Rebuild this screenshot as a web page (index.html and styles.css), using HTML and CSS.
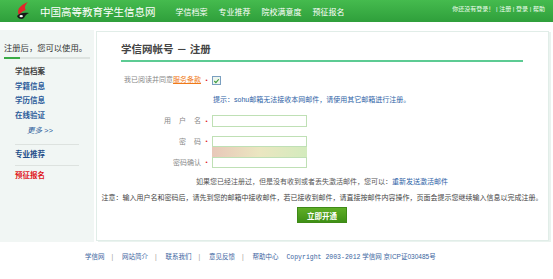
FILE: index.html
```html
<!DOCTYPE html>
<html lang="zh-CN">
<head>
  <meta charset="UTF-8">
  <title>学信网帐号 - 注册</title>
  <link rel="stylesheet" href="styles.css">
</head>
<body>
  <div class="topbar">
    <svg class="logo" width="16" height="18" viewBox="0 0 16 18">
      <path d="M13 0 C8 2 3 5 3 10 C3 12 4 13 5 13 C6 10 8 9 11 8 C9 6 10 3 13 0 Z" fill="#e1252a"/>
      <path d="M2 14 C4 11 9 10 14 11 C11 12 10 14 9 16 C7 18 3 17 2 14 Z" fill="#1a1a1a"/>
      <ellipse cx="6.2" cy="14.2" rx="1.7" ry="1.1" fill="#fff"/>
    </svg>
    <span class="site-name">中国高等教育学生信息网</span>
    <nav class="nav">
      <a href="#">学信档案</a>
      <a href="#">专业推荐</a>
      <a href="#">院校满意度</a>
      <a href="#">预征报名</a>
    </nav>
    <div class="user-links">你还没有登录！ | 注册 | 登录 | 帮助</div>
  </div>

  <div class="wrap">
    <aside class="sidebar">
      <p class="side-title">注册后，您可以使用。</p>
      <div class="side-line"></div>
      <ul class="side-list">
        <li class="dark">学信档案</li>
        <li><a href="#">学籍信息</a></li>
        <li><a href="#">学历信息</a></li>
        <li><a href="#">在线验证</a></li>
        <li class="more"><a href="#">更多 &gt;&gt;</a></li>
      </ul>
      <div class="side-sep"></div>
      <p class="side-strong">专业推荐</p>
      <div class="side-sep"></div>
      <p class="side-strong red">预征报名</p>
    </aside>

    <main class="panel">
      <h1 class="panel-title">学信网帐号 － 注册</h1>

      <div class="row agree">
        <span class="lbl">我已阅读并同意<a href="#" class="terms">服务条款</a></span>
        <span class="req">•</span>
        <span class="check">
          <svg width="8" height="8" viewBox="0 0 8 8"><path d="M1.5 4 L3.3 5.8 L6.6 2" stroke="#3a9a3a" stroke-width="1.3" fill="none"/></svg>
        </span>
      </div>

      <p class="hint">提示：sohu邮箱无法接收本网邮件，请使用其它邮箱进行注册。</p>

      <div class="row field user">
        <span class="lbl spaced">用 户 名</span>
        <span class="req">•</span>
        <input type="text" class="box">
      </div>

      <div class="row field pw">
        <span class="lbl spaced">密 码</span>
        <span class="req">•</span>
        <div class="pw-col">
          <input type="password" class="box">
          <div class="strength"></div>
        </div>
      </div>

      <div class="row field confirm">
        <span class="lbl">密码确认</span>
        <span class="req">•</span>
        <input type="password" class="box">
      </div>

      <p class="resend">如果您已经注册过，但是没有收到或者丢失激活邮件，您可以：<a href="#">重新发送激活邮件</a></p>
      <p class="note">注意：输入用户名和密码后，请先到您的邮箱中接收邮件，若已接收到邮件，请直接按邮件内容操作，页面会提示您继续输入信息以完成注册。</p>

      <div class="btn-row"><button type="button" class="btn">立即开通</button></div>
    </main>
  </div>

  <div class="footer">
    <a href="#">学信网</a><span class="sep">|</span>
    <a href="#">网站简介</a><span class="sep">|</span>
    <a href="#">联系我们</a><span class="sep">|</span>
    <a href="#">意见反馈</a><span class="sep">|</span>
    <a href="#">帮助中心</a>
    <span class="copy"><span class="mono">Copyright 2003-2012</span> 学信网 京ICP证030485号</span>
  </div>
</body>
</html>
```

FILE: styles.css
```css
body {
  margin: 0;
  padding: 0;
  font-family: "Liberation Sans", "Noto Sans CJK SC", sans-serif;
  color: #333;
  background: #fff;
}
a {
  text-decoration: none;
}
p {
  margin: 0;
}
.topbar {
  height: 22px;
  display: flex;
  align-items: center;
  background: linear-gradient(#45bb4e, #2f9f3b);
  color: #fff;
}
.logo {
  margin-left: 15px;
  flex: none;
}
.site-name {
  margin-left: 9px;
  font-size: 10.5px;
}
.nav {
  display: flex;
  gap: 11px;
  margin-left: 20px;
  font-size: 8px;
}
.nav a {
  color: #fff;
}
.user-links {
  margin-left: auto;
  margin-right: 8px;
  align-self: flex-start;
  padding-top: 4px;
  font-size: 6px;
  color: #f2fff2;
}
.wrap {
  display: flex;
  margin-top: 8px;
}
.sidebar {
  width: 94px;
  height: 212px;
  background: #f1f6f4;
  padding-top: 13px;
  box-sizing: border-box;
}
.side-title {
  padding-left: 4px;
  font-size: 8.3px;
  line-height: 10px;
  color: #333;
}
.side-line {
  height: 2px;
  margin: 4px 4px 0 4px;
  background: linear-gradient(to right, #3aab45 16px, #dde3e0 16px);
}
.side-list {
  list-style: none;
  margin: 6px 0 0 0;
  padding: 0 0 0 15px;
  font-size: 7.5px;
  line-height: 14.7px;
  font-weight: bold;
}
.side-list a {
  color: #2b5b9a;
}
.side-list .dark {
  color: #444;
}
.side-list .more {
  padding-left: 12px;
  font-style: italic;
  font-weight: normal;
}
.side-sep {
  height: 1px;
  background: #dde2df;
  margin: 5px 15px 0 15px;
}
.side-strong {
  padding-left: 15px;
  margin: 5px 0 0;
  font-size: 7.5px;
  line-height: 10px;
  font-weight: bold;
  color: #1f4f8a;
}
.side-strong.red {
  color: #e0181c;
}
.panel {
  width: 453px;
  height: 210px;
  margin-left: 2px;
  margin-top: 1px;
  border: 1px solid #e1ede8;
  box-shadow: 2px 1px 0 #eaf3ef;
  box-sizing: border-box;
  padding: 10px 25px 0 24px;
  background: #fff;
}
.panel-title {
  margin: 0;
  font-size: 10.5px;
  line-height: 14px;
  font-weight: bold;
  color: #444;
  padding-bottom: 4px;
  border-bottom: 2px solid #5ccb93;
}
.row {
  display: flex;
  align-items: flex-start;
  margin-left: -24px;
  font-size: 7px;
}
.lbl {
  width: 104px;
  flex: none;
  text-align: right;
  color: #888;
}
.lbl.spaced {
  width: 107px;
  letter-spacing: 3px;
  margin-right: -3px;
}
.req {
  width: 11px;
  flex: none;
  color: #e02020;
  text-align: center;
  font-size: 6px;
}
.agree {
  margin-top: 13px;
  line-height: 10px;
}
.agree .req {
  line-height: 10px;
}
.terms {
  color: #f07a18;
  text-decoration: underline;
}
.check {
  width: 7px;
  height: 7px;
  margin-top: 1px;
  border: 1px solid #7a9fc0;
  background: #eef6ee;
  display: flex;
  align-items: center;
  justify-content: center;
}
.hint {
  margin: 10px 0 0 92px;
  font-size: 7px;
  line-height: 10px;
  color: #2d62a6;
}
.field .lbl,
.field .req {
  line-height: 12px;
}
.box {
  display: block;
  flex: none;
  width: 95px;
  height: 12px;
  margin: 0;
  padding: 0;
  box-sizing: border-box;
  border: 1px solid #bfe0b5;
  background: #fff;
}
.user {
  margin-top: 10px;
}
.pw {
  margin-top: 9px;
}
.pw .box,
.confirm .box {
  height: 11px;
}
.pw .lbl,
.pw .req,
.confirm .lbl,
.confirm .req {
  line-height: 11px;
}
.pw-col {
  display: flex;
  flex-direction: column;
  flex: none;
  width: 95px;
}
.strength {
  width: 95px;
  height: 10px;
  background: linear-gradient(to right, #e8c8b9, #ebe6c1 50%, #d3ebbd);
}
.confirm {
  margin-top: 0;
}
.resend {
  margin-top: 9px;
  text-align: center;
  font-size: 7px;
  line-height: 10px;
  color: #555;
}
.resend a {
  color: #2d62a6;
}
.note {
  margin: 6px -22px 0 -22px;
  text-align: center;
  white-space: nowrap;
  font-size: 7px;
  line-height: 10px;
  color: #444;
}
.btn-row {
  margin-top: 4px;
  display: flex;
  justify-content: center;
}
.btn {
  width: 50px;
  height: 16px;
  padding: 0;
  border: 1px solid #3f8a17;
  background: linear-gradient(#5fae26, #3f9016);
  color: #fff;
  font-family: "Noto Sans CJK SC", sans-serif;
  font-size: 7.5px;
  font-weight: bold;
  cursor: pointer;
}
.footer {
  margin-top: 10px;
  padding-left: 85px;
  font-size: 6.5px;
  line-height: 10px;
  color: #3a64a0;
}
.footer a {
  color: #3a64a0;
}
.sep {
  color: #999;
  margin: 0 7px;
}
.copy {
  margin-left: 6px;
}
.mono {
  font-family: "Liberation Mono", monospace;
  font-size: 6.5px;
}
```
